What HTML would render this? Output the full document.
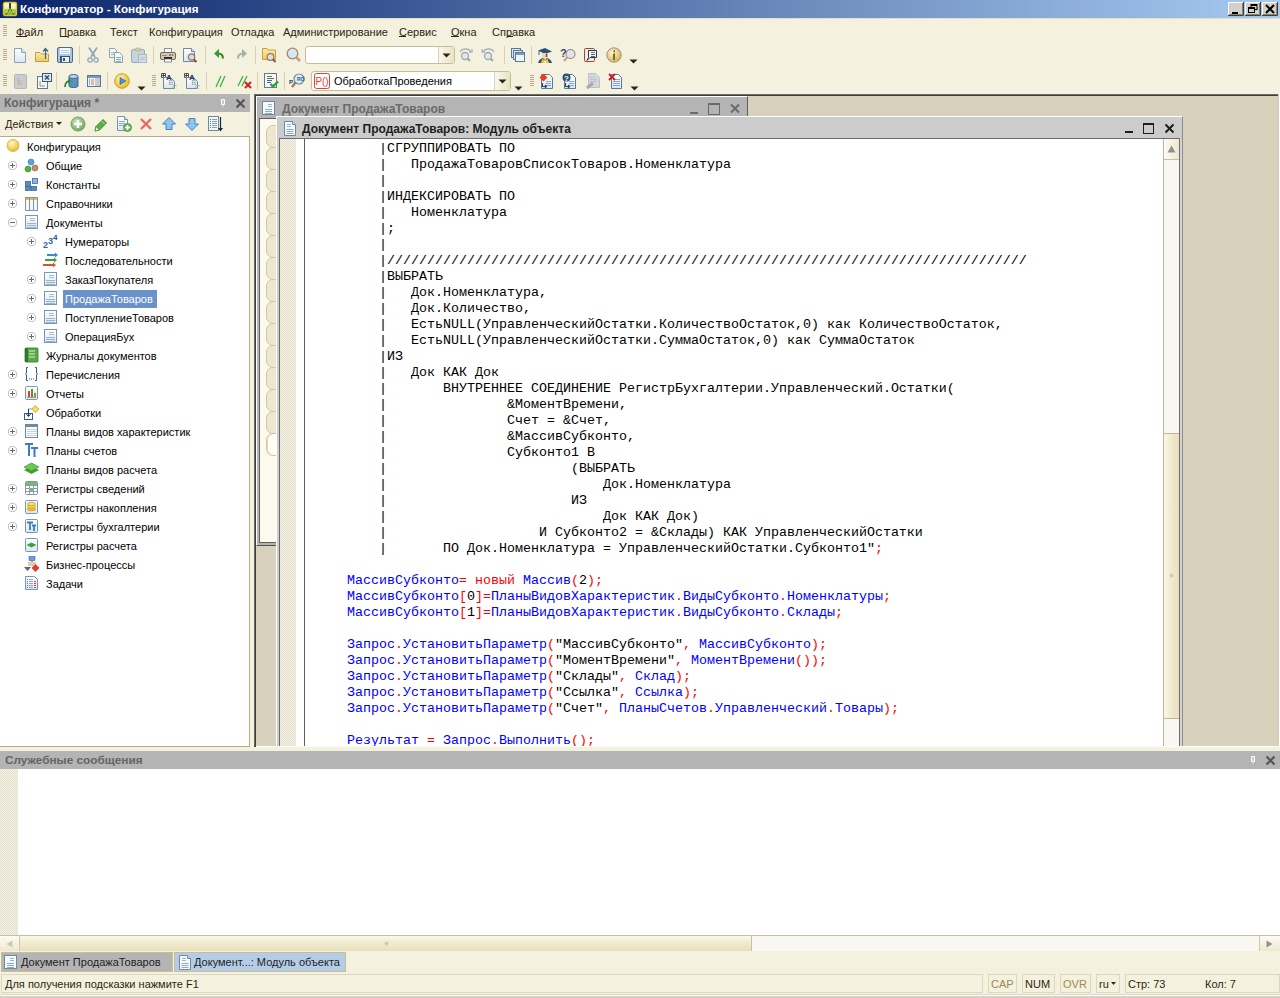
<!DOCTYPE html><html><head><meta charset="utf-8"><style>
html,body{margin:0;padding:0;width:1280px;height:998px;overflow:hidden;background:#F4F1DE;font-family:'Liberation Sans', sans-serif;font-size:11px;color:#000;}
div{box-sizing:border-box;}
svg{display:block;}
.t{position:absolute;white-space:pre;}
</style></head><body>
<div style="position:absolute;left:0px;top:0px;width:1280px;height:18px;background:linear-gradient(to right,#0A246A,#A6CAF0);"></div><svg style="position:absolute;left:2px;top:1px" width="16" height="16" viewBox="0 0 16 16"><defs><linearGradient id="gapp" x1="0" y1="0" x2="0" y2="1"><stop offset="0" stop-color="#FFFDF0"/><stop offset="0.45" stop-color="#F0F0A0"/><stop offset="0.55" stop-color="#A8D050"/><stop offset="1" stop-color="#78B030"/></linearGradient></defs><rect x="1.5" y="1.5" width="13" height="13" rx="1.5" fill="url(#gapp)" stroke="#E8C020" stroke-width="1.4"/><path d="M7 2H9V7H7Z" fill="#404040"/><path d="M8 7L4 14M8 7L12 14" stroke="#606040" stroke-width="1"/><circle cx="5" cy="11" r="0.8" fill="#E8F0A0"/><circle cx="11" cy="11" r="0.8" fill="#E8F0A0"/></svg><div style="position:absolute;left:20px;top:1px;white-space:pre;font-weight:bold;font-size:11.7px;color:#fff;line-height:16px;">Конфигуратор - Конфигурация</div><svg style="position:absolute;left:1228px;top:2px" width="16" height="14" viewBox="0 0 16 14"><rect width="16" height="14" fill="#D4D0C8"/><path d="M0 13.5H15.5V0" stroke="#404040" fill="none"/><path d="M0.5 13V0.5H15" stroke="#fff" fill="none"/><path d="M1 12.5H14.5V1" stroke="#808080" fill="none"/><rect x="4" y="10" width="6" height="2" fill="#000"/></svg><svg style="position:absolute;left:1245px;top:2px" width="16" height="14" viewBox="0 0 16 14"><rect width="16" height="14" fill="#D4D0C8"/><path d="M0 13.5H15.5V0" stroke="#404040" fill="none"/><path d="M0.5 13V0.5H15" stroke="#fff" fill="none"/><path d="M1 12.5H14.5V1" stroke="#808080" fill="none"/><rect x="6" y="2.5" width="6" height="5" fill="none" stroke="#000"/><rect x="6" y="2" width="6" height="2" fill="#000"/><rect x="3.5" y="5.5" width="6" height="5" fill="#D4D0C8" stroke="#000"/><rect x="3" y="5" width="7" height="2" fill="#000"/></svg><svg style="position:absolute;left:1262px;top:2px" width="16" height="14" viewBox="0 0 16 14"><rect width="16" height="14" fill="#D4D0C8"/><path d="M0 13.5H15.5V0" stroke="#404040" fill="none"/><path d="M0.5 13V0.5H15" stroke="#fff" fill="none"/><path d="M1 12.5H14.5V1" stroke="#808080" fill="none"/><path d="M4 3 L12 11 M12 3 L4 11" stroke="#000" stroke-width="2"/></svg><div style="position:absolute;left:0px;top:18px;width:1280px;height:1px;background:#E2DECA;"></div><svg style="position:absolute;left:3px;top:25px" width="4" height="12" viewBox="0 0 4 12"><rect x="0" y="0" width="4" height="1" fill="#B5AD8E"/><rect x="0" y="2" width="4" height="1" fill="#B5AD8E"/><rect x="0" y="4" width="4" height="1" fill="#B5AD8E"/><rect x="0" y="6" width="4" height="1" fill="#B5AD8E"/><rect x="0" y="8" width="4" height="1" fill="#B5AD8E"/><rect x="0" y="10" width="4" height="1" fill="#B5AD8E"/></svg><div style="position:absolute;left:16px;top:25px;white-space:pre;color:#2E2610;font-size:11px;line-height:14px;">Файл</div><div style="position:absolute;left:59px;top:25px;white-space:pre;color:#2E2610;font-size:11px;line-height:14px;">Правка</div><div style="position:absolute;left:110px;top:25px;white-space:pre;color:#2E2610;font-size:11px;line-height:14px;">Текст</div><div style="position:absolute;left:149px;top:25px;white-space:pre;color:#2E2610;font-size:11px;line-height:14px;">Конфигурация</div><div style="position:absolute;left:231px;top:25px;white-space:pre;color:#2E2610;font-size:11px;line-height:14px;">Отладка</div><div style="position:absolute;left:283px;top:25px;white-space:pre;color:#2E2610;font-size:11px;line-height:14px;">Администрирование</div><div style="position:absolute;left:399px;top:25px;white-space:pre;color:#2E2610;font-size:11px;line-height:14px;">Сервис</div><div style="position:absolute;left:451px;top:25px;white-space:pre;color:#2E2610;font-size:11px;line-height:14px;">Окна</div><div style="position:absolute;left:492px;top:25px;white-space:pre;color:#2E2610;font-size:11px;line-height:14px;">Справка</div><div style="position:absolute;left:16px;top:36px;width:11px;height:1px;background:#2E2610;"></div><div style="position:absolute;left:60px;top:36px;width:8px;height:1px;background:#2E2610;"></div><div style="position:absolute;left:399px;top:36px;width:7px;height:1px;background:#2E2610;"></div><div style="position:absolute;left:451px;top:36px;width:8px;height:1px;background:#2E2610;"></div><div style="position:absolute;left:507px;top:36px;width:6px;height:1px;background:#2E2610;"></div><svg width="0" height="0" style="position:absolute"><defs><linearGradient id="gpage" x1="0" y1="0" x2="0" y2="1"><stop offset="0" stop-color="#fff"/><stop offset="1" stop-color="#D8E6F2"/></linearGradient><radialGradient id="ginfo" cx="0.4" cy="0.35" r="0.7"><stop offset="0" stop-color="#FFF4DC"/><stop offset="1" stop-color="#E8A848"/></radialGradient><radialGradient id="gplay" cx="0.4" cy="0.35" r="0.7"><stop offset="0" stop-color="#FFF4B0"/><stop offset="1" stop-color="#E8B818"/></radialGradient><linearGradient id="gfold" x1="0" y1="0" x2="0" y2="1"><stop offset="0" stop-color="#FBEBA8"/><stop offset="1" stop-color="#EEC860"/></linearGradient><linearGradient id="gcombo" x1="0" y1="0" x2="1" y2="0"><stop offset="0" stop-color="#FBF9EE"/><stop offset="1" stop-color="#E8E0C0"/></linearGradient></defs></svg><svg style="position:absolute;left:3px;top:49px" width="4" height="12" viewBox="0 0 4 12"><rect x="0" y="0" width="4" height="1" fill="#B5AD8E"/><rect x="0" y="2" width="4" height="1" fill="#B5AD8E"/><rect x="0" y="4" width="4" height="1" fill="#B5AD8E"/><rect x="0" y="6" width="4" height="1" fill="#B5AD8E"/><rect x="0" y="8" width="4" height="1" fill="#B5AD8E"/><rect x="0" y="10" width="4" height="1" fill="#B5AD8E"/></svg><svg style="position:absolute;left:12px;top:47px" width="16" height="16" viewBox="0 0 16 16"><path d="M2.5 1.5H9.5L13.5 5.5V15.5H2.5Z" fill="url(#gpage)" stroke="#8AA2B8"/><path d="M9.5 1.5V5.5H13.5" fill="#DCE8F2" stroke="#8AA2B8"/></svg><svg style="position:absolute;left:34px;top:47px" width="16" height="16" viewBox="0 0 16 16"><path d="M1.5 5.5H6L7.5 7H14.5V14.5H1.5Z" fill="url(#gfold)" stroke="#C49A40"/><path d="M11.5 12V2 M9 4.5L11.5 1.5L14 4.5" stroke="#3A6282" stroke-width="1.2" fill="none"/></svg><svg style="position:absolute;left:57px;top:47px" width="16" height="16" viewBox="0 0 16 16"><rect x="0.5" y="0.5" width="15" height="15" rx="1.5" fill="#A8C8E4" stroke="#4A6A88"/><rect x="3" y="1" width="10" height="6" fill="#F4F8FA"/><path d="M4 3.5H12M4 5.5H12" stroke="#A8D4E0"/><rect x="3" y="9" width="10" height="6" fill="#3A5470"/><rect x="5" y="10" width="7" height="5" fill="#F0F0F0"/><rect x="6" y="11" width="2" height="3" fill="#3A5470"/></svg><svg style="position:absolute;left:86px;top:47px" width="16" height="16" viewBox="0 0 16 16"><path d="M3 0.5L9 10 M11 0.5L5 10" stroke="#8EA2B6" stroke-width="1.7"/><circle cx="4" cy="13" r="2.2" fill="none" stroke="#8EA2B6" stroke-width="1.2"/><circle cx="10" cy="13" r="2.2" fill="none" stroke="#8EA2B6" stroke-width="1.2"/></svg><svg style="position:absolute;left:108px;top:47px" width="16" height="16" viewBox="0 0 16 16"><path d="M1.5 1.5H6.5L8.5 3.5V10.5H1.5Z" fill="#F4F8FC" stroke="#8AA8A0"/><path d="M3 5.5H6M3 7.5H7" stroke="#9AB0C0"/><path d="M6.5 5.5H11.5L14.5 8.5V15.5H6.5Z" fill="#F4F8FC" stroke="#8AA8A0"/><path d="M8 10.5H13M8 12.5H13M8 14.5H13" stroke="#8AA4BC"/></svg><svg style="position:absolute;left:131px;top:47px" width="16" height="16" viewBox="0 0 16 16"><rect x="0.5" y="2.5" width="13" height="13" rx="1.5" fill="#C8D4DC" stroke="#98AABA"/><rect x="4" y="1" width="6" height="3" rx="1.5" fill="#D0C8A8" stroke="#B0A888" stroke-width="0.6"/><rect x="7.5" y="7.5" width="8" height="8" fill="#D4DEE6" stroke="#A8B8C4"/><path d="M9 10.5H14M9 12.5H14" stroke="#B0C0CC"/></svg><svg style="position:absolute;left:160px;top:47px" width="16" height="16" viewBox="0 0 16 16"><rect x="4.5" y="1.5" width="7" height="5" fill="#F8FAFC" stroke="#8898A8"/><rect x="0.5" y="5.5" width="15" height="7" rx="1.5" fill="#D8C8B8" stroke="#706860"/><path d="M2 8.5H7" stroke="#A08870"/><circle cx="10" cy="8" r="0.9" fill="#E03030"/><circle cx="12.5" cy="8" r="0.9" fill="#30B030"/><rect x="4" y="10" width="8" height="2" fill="#202020"/><rect x="4.5" y="12" width="7" height="3" fill="#fff" stroke="#707070" stroke-width="0.8"/></svg><svg style="position:absolute;left:182px;top:47px" width="16" height="16" viewBox="0 0 16 16"><path d="M1.5 1.5H9.5L12.5 4.5V14.5H1.5Z" fill="url(#gpage)" stroke="#6A8AA8"/><path d="M9.5 1.5V4.5H12.5" fill="#DCE8F2" stroke="#6A8AA8"/><circle cx="9.5" cy="10" r="3.2" fill="#C8E0F4" stroke="#A07050" stroke-width="1.2"/><path d="M11.7 12.3L14.5 15" stroke="#8A5030" stroke-width="2"/></svg><svg style="position:absolute;left:213px;top:47px" width="16" height="16" viewBox="0 0 16 16"><path d="M10 11.5C10 8 8.5 6.5 5 6.5" stroke="#3A8A2A" stroke-width="2.2" fill="none"/><path d="M1 6.5L6 2V11Z" fill="#3A9A2A"/></svg><svg style="position:absolute;left:235px;top:47px" width="16" height="16" viewBox="0 0 16 16"><path d="M3 11.5C3 8 4.5 6.5 8 6.5" stroke="#A8B8A8" stroke-width="2.2" fill="none"/><path d="M12 6.5L7 2V11Z" fill="#A0B4A0"/></svg><svg style="position:absolute;left:261px;top:47px" width="16" height="16" viewBox="0 0 16 16"><path d="M1.5 1.5H6L7 3H14.5V12.5H1.5Z" fill="url(#gfold)" stroke="#C8A040"/><circle cx="9.5" cy="10" r="3.3" fill="#D0E4F4" stroke="#A07858" stroke-width="1.2"/><path d="M11.8 12.3L14.5 15" stroke="#8A6040" stroke-width="2"/></svg><svg style="position:absolute;left:286px;top:47px" width="16" height="16" viewBox="0 0 16 16"><circle cx="6.5" cy="6.5" r="5.3" fill="#D8E6F2" stroke="#A88870" stroke-width="1.3"/><path d="M10.3 10.3L14 14" stroke="#C0A088" stroke-width="2.6"/></svg><svg style="position:absolute;left:458px;top:47px" width="16" height="16" viewBox="0 0 16 16"><circle cx="7" cy="9" r="3.5" fill="#E0E8EC" stroke="#A0A8B0" stroke-width="1.3"/><path d="M9.5 11.5L12 14" stroke="#A8A098" stroke-width="2"/><path d="M2 5C4 1 11 1 13 5" stroke="#A8B4BC" fill="none" stroke-width="1.3"/><path d="M11 5L14 5L14 2" stroke="#A8B4BC" fill="none" stroke-width="1.3"/></svg><svg style="position:absolute;left:480px;top:47px" width="16" height="16" viewBox="0 0 16 16"><circle cx="8" cy="9" r="3.5" fill="#E0E8EC" stroke="#A0A8B0" stroke-width="1.3"/><path d="M10.5 11.5L13 14" stroke="#A8A098" stroke-width="2"/><path d="M14 5C12 1 5 1 3 5" stroke="#A8B4BC" fill="none" stroke-width="1.3"/><path d="M5 5L2 5L2 2" stroke="#A8B4BC" fill="none" stroke-width="1.3"/></svg><svg style="position:absolute;left:510px;top:47px" width="16" height="16" viewBox="0 0 16 16"><rect x="1.5" y="1.5" width="9" height="9" fill="#DCE8F4" stroke="#5A7A9A"/><rect x="3.5" y="3.5" width="9" height="9" fill="#DCE8F4" stroke="#5A7A9A"/><rect x="5.5" y="5.5" width="9" height="9" fill="#EEF4FA" stroke="#5A7A9A"/><rect x="6" y="6" width="8" height="2" fill="#7A9ABA"/></svg><svg style="position:absolute;left:537px;top:47px" width="16" height="16" viewBox="0 0 16 16"><path d="M1 3.5L8 1L15 4.5L8 7Z" fill="#2A5278"/><path d="M2 4V8" stroke="#3A6A98" stroke-width="1"/><path d="M5 6V9C5 11 6.5 12 8 12C9.5 12 11 11 11 9V6" fill="#F4D4B8"/><path d="M9.5 6.5V10" stroke="#8A5030" stroke-width="1.5"/><path d="M1 16C2 12.5 4 11.5 6 11L8 13L10 11C12 11.5 14 12.5 15 16Z" fill="#2A5278"/><path d="M5.5 11.5L4 16H12L10.5 11.5L8 14Z" fill="#F0C830"/><path d="M7 13.5L8 16H9L9 13.5Z" fill="#fff"/></svg><svg style="position:absolute;left:560px;top:47px" width="16" height="16" viewBox="0 0 16 16"><text x="0" y="10" font-size="11" font-weight="bold" fill="#2A4A70" font-family="Liberation Sans">?</text><circle cx="10.5" cy="7" r="4.5" fill="#D8E6F4" stroke="#A88068" stroke-width="1.1"/><path d="M7.5 10L4 14" stroke="#C8A088" stroke-width="2.2"/></svg><svg style="position:absolute;left:583px;top:47px" width="16" height="16" viewBox="0 0 16 16"><rect x="1.5" y="1.5" width="10" height="13" rx="1" fill="#FCE8D8" stroke="#8A5030"/><path d="M5.5 3.5H13.5V10.5H7L4 13.5L5.5 10.5Z" fill="#F4F8FC" stroke="#1A3A6A"/><path d="M8 5.5H12" stroke="#30A040"/><path d="M8 7.5H12" stroke="#D03030"/><path d="M8 9.5H12" stroke="#3A6AAA"/></svg><svg style="position:absolute;left:606px;top:47px" width="16" height="16" viewBox="0 0 16 16"><circle cx="8" cy="8" r="7.2" fill="url(#ginfo)" stroke="#9A9080"/><path d="M7 7L9 6V13H7Z" fill="#3A8A20"/><path d="M7.5 3.5L9 3V5L7.5 5.5Z" fill="#3A8A20"/></svg><div style="position:absolute;left:79px;top:46px;width:1px;height:18px;background:#D8D0B0;"></div><div style="position:absolute;left:153px;top:46px;width:1px;height:18px;background:#D8D0B0;"></div><div style="position:absolute;left:205px;top:46px;width:1px;height:18px;background:#D8D0B0;"></div><div style="position:absolute;left:255px;top:46px;width:1px;height:18px;background:#D8D0B0;"></div><div style="position:absolute;left:504px;top:46px;width:1px;height:18px;background:#D8D0B0;"></div><div style="position:absolute;left:531px;top:46px;width:1px;height:18px;background:#D8D0B0;"></div><svg style="position:absolute;left:629px;top:59px" width="9" height="5" viewBox="0 0 9 5"><path d="M0.5 0.5H8.5L4.5 4.5Z" fill="#2E2610"/></svg><div style="position:absolute;left:305px;top:46px;width:150px;height:18px;background:#fff;border:1px solid #C8BE96;border-radius:3px;"></div><div style="position:absolute;left:438px;top:47px;width:16px;height:16px;background:linear-gradient(to right,#FBF8EC,#E9E2C6);border-left:1px solid #D8D0B0;border-radius:0 2px 2px 0;"></div><svg style="position:absolute;left:442px;top:53px" width="9" height="5" viewBox="0 0 9 5"><path d="M0.5 0.5H8.5L4.5 4.5Z" fill="#2E2610"/></svg><svg style="position:absolute;left:3px;top:75px" width="4" height="12" viewBox="0 0 4 12"><rect x="0" y="0" width="4" height="1" fill="#B5AD8E"/><rect x="0" y="2" width="4" height="1" fill="#B5AD8E"/><rect x="0" y="4" width="4" height="1" fill="#B5AD8E"/><rect x="0" y="6" width="4" height="1" fill="#B5AD8E"/><rect x="0" y="8" width="4" height="1" fill="#B5AD8E"/><rect x="0" y="10" width="4" height="1" fill="#B5AD8E"/></svg><svg style="position:absolute;left:13px;top:73px" width="16" height="16" viewBox="0 0 16 16"><rect x="1.5" y="1.5" width="12" height="14" rx="1" fill="#C8CCD0" stroke="#B0B8BC"/><path d="M5 5V11H9M5 8H9" stroke="#D8A090" fill="none"/></svg><svg style="position:absolute;left:36px;top:73px" width="16" height="16" viewBox="0 0 16 16"><rect x="1.5" y="3.5" width="10" height="12" fill="#F4F8FC" stroke="#5A7C9C"/><path d="M4 8V13H9" stroke="#C08060" fill="none"/><rect x="6.5" y="0.5" width="9" height="8" fill="#DCE8F4" stroke="#3A5A7A"/><path d="M9 2.5L13 6.5M13 2.5L9 6.5" stroke="#2A4A6A" stroke-width="1.4"/></svg><svg style="position:absolute;left:63px;top:73px" width="16" height="16" viewBox="0 0 16 16"><path d="M6 3.5V13C6 15 15 15 15 13V3.5" fill="#5A90C0" stroke="#3A6890"/><ellipse cx="10.5" cy="3.5" rx="4.5" ry="2" fill="#B8D8F0" stroke="#3A6890"/><path d="M2 14C2 10 4 8 7 8" stroke="#2A8A3A" stroke-width="1.8" fill="none"/><path d="M5 6L8.5 8L5.5 10.5Z" fill="#2A8A3A"/></svg><svg style="position:absolute;left:86px;top:73px" width="16" height="16" viewBox="0 0 16 16"><rect x="1.5" y="2.5" width="13" height="11" fill="#F0F4F8" stroke="#5A7A9A"/><rect x="2" y="3" width="12" height="2" fill="#7A9ABA"/><rect x="9" y="5" width="5" height="8" fill="#C8CCD0"/><path d="M3 7H4M3 9H4M3 11H4" stroke="#3A6A9A"/><path d="M5 7H8M5 9H8M5 11H8" stroke="#D08050"/></svg><svg style="position:absolute;left:114px;top:73px" width="16" height="16" viewBox="0 0 16 16"><circle cx="8" cy="8" r="7.3" fill="url(#gplay)" stroke="#C8A020"/><path d="M6 4.5L12 8L6 11.5Z" fill="#4A90D8" stroke="#2A6AA8" stroke-width="0.6"/></svg><svg style="position:absolute;left:161px;top:73px" width="16" height="16" viewBox="0 0 16 16"><path d="M0.5 0.5H4.5V4.5H0.5ZM0.5 2.5H4.5M2.5 0.5V4.5" stroke="#303030" stroke-width="0.8" fill="none"/><path d="M2.5 4.5H9.5L13.5 8.5V15.5H2.5Z" fill="url(#gpage)" stroke="#6A8AA8"/><text x="5" y="7" font-size="8" font-weight="bold" fill="#1A3A6A" font-family="Liberation Sans">A</text><text x="7.5" y="12" font-size="7" fill="#909898" font-family="Liberation Sans">B</text><text x="11" y="16.5" font-size="7" fill="#909898" font-family="Liberation Sans">C</text></svg><svg style="position:absolute;left:184px;top:73px" width="16" height="16" viewBox="0 0 16 16"><path d="M0.5 0.5H4.5V4.5H0.5ZM0.5 2.5H4.5M2.5 0.5V4.5" stroke="#303030" stroke-width="0.8" fill="none"/><path d="M2.5 4.5H9.5L13.5 8.5V15.5H2.5Z" fill="url(#gpage)" stroke="#6A8AA8"/><text x="5" y="7" font-size="8" font-weight="bold" fill="#1A3A6A" font-family="Liberation Sans">A</text><text x="7.5" y="12" font-size="7" fill="#909898" font-family="Liberation Sans">B</text><text x="11" y="16.5" font-size="7" fill="#909898" font-family="Liberation Sans">C</text></svg><svg style="position:absolute;left:214px;top:73px" width="16" height="16" viewBox="0 0 16 16"><path d="M2 14L7 3M6 14L11 3" stroke="#40B040" stroke-width="1.3"/></svg><svg style="position:absolute;left:237px;top:73px" width="16" height="16" viewBox="0 0 16 16"><path d="M1 13L6 3M5 13L10 3" stroke="#40B040" stroke-width="1.3"/><path d="M8 9L14 15M14 9L8 15" stroke="#D02020" stroke-width="2"/></svg><svg style="position:absolute;left:263px;top:73px" width="16" height="16" viewBox="0 0 16 16"><rect x="1.5" y="0.5" width="12" height="14" fill="#F4F8FC" stroke="#5A7A9A"/><path d="M4 3.5H9" stroke="#30A040"/><path d="M4 5.5H11" stroke="#D04040"/><path d="M4 7.5H9" stroke="#3A6AAA"/><path d="M4 9.5H8" stroke="#3A6AAA"/><path d="M7.5 11L10 13.5L15 8.5" stroke="#30A030" stroke-width="2.4" fill="none"/></svg><svg style="position:absolute;left:289px;top:73px" width="16" height="16" viewBox="0 0 16 16"><circle cx="10" cy="6" r="5" fill="#E0ECF6" stroke="#6A8AA8" stroke-width="1.2"/><text x="0" y="11" font-size="6" font-weight="bold" fill="#1A3A6A" font-family="Liberation Sans">P</text><text x="8" y="8" font-size="5" font-weight="bold" fill="#2A5A8A" font-family="Liberation Sans">ROL</text><path d="M6.5 9.5L3 14" stroke="#A07850" stroke-width="2.2"/></svg><svg style="position:absolute;left:539px;top:73px" width="16" height="16" viewBox="0 0 16 16"><path d="M2.5 1.5H10.5L13.5 4.5V15.5H2.5Z" fill="url(#gpage)" stroke="#5A7A98"/><path d="M7 8.5H12M7 10.5H12M7 12.5H12" stroke="#8AAAC4"/><path d="M3.5 10V13.5H7M6 12L7.5 13.5L6 15" stroke="#2A4A68" stroke-width="1.1" fill="none"/><path d="M4.5 0.5L8.5 4.5L4.5 8.5L0.5 4.5Z" fill="#E84020"/></svg><svg style="position:absolute;left:562px;top:73px" width="16" height="16" viewBox="0 0 16 16"><path d="M2.5 1.5H10.5L13.5 4.5V15.5H2.5Z" fill="url(#gpage)" stroke="#5A7A98"/><path d="M7 8.5H12M7 10.5H12M7 12.5H12" stroke="#8AAAC4"/><path d="M3.5 10V13.5H7M6 12L7.5 13.5L6 15" stroke="#2A4A68" stroke-width="1.1" fill="none"/><circle cx="4.5" cy="4.5" r="4" fill="#2A5070"/><text x="2" y="8" font-size="8" font-weight="bold" fill="#fff" font-family="Liberation Sans">?</text></svg><svg style="position:absolute;left:585px;top:73px" width="16" height="16" viewBox="0 0 16 16"><path d="M3.5 0.5H10.5L14.5 4.5V14.5H3.5Z" fill="#D4D8DC" stroke="#B8C0C8"/><path d="M5 4.5H10M5 6.5H12M5 8.5H12" stroke="#B8C4D0"/><path d="M2 15L8 10" stroke="#B0A8A8" stroke-width="3.2"/></svg><svg style="position:absolute;left:608px;top:73px" width="16" height="16" viewBox="0 0 16 16"><path d="M3.5 1.5H10.5L13.5 4.5V15.5H3.5Z" fill="url(#gpage)" stroke="#5A7A98"/><path d="M5 6.5H12M5 8.5H12M5 10.5H12M5 12.5H12" stroke="#8AAAC4"/><path d="M1 1L7 7M7 1L1 7" stroke="#C82020" stroke-width="1.8"/></svg><div style="position:absolute;left:56px;top:72px;width:1px;height:18px;background:#D8D0B0;"></div><div style="position:absolute;left:107px;top:72px;width:1px;height:18px;background:#D8D0B0;"></div><div style="position:absolute;left:206px;top:72px;width:1px;height:18px;background:#D8D0B0;"></div><div style="position:absolute;left:257px;top:72px;width:1px;height:18px;background:#D8D0B0;"></div><div style="position:absolute;left:284px;top:72px;width:1px;height:18px;background:#D8D0B0;"></div><svg style="position:absolute;left:152px;top:75px" width="4" height="12" viewBox="0 0 4 12"><rect x="0" y="0" width="4" height="1" fill="#B5AD8E"/><rect x="0" y="2" width="4" height="1" fill="#B5AD8E"/><rect x="0" y="4" width="4" height="1" fill="#B5AD8E"/><rect x="0" y="6" width="4" height="1" fill="#B5AD8E"/><rect x="0" y="8" width="4" height="1" fill="#B5AD8E"/><rect x="0" y="10" width="4" height="1" fill="#B5AD8E"/></svg><svg style="position:absolute;left:530px;top:75px" width="4" height="12" viewBox="0 0 4 12"><rect x="0" y="0" width="4" height="1" fill="#B5AD8E"/><rect x="0" y="2" width="4" height="1" fill="#B5AD8E"/><rect x="0" y="4" width="4" height="1" fill="#B5AD8E"/><rect x="0" y="6" width="4" height="1" fill="#B5AD8E"/><rect x="0" y="8" width="4" height="1" fill="#B5AD8E"/><rect x="0" y="10" width="4" height="1" fill="#B5AD8E"/></svg><svg style="position:absolute;left:137px;top:86px" width="9" height="5" viewBox="0 0 9 5"><path d="M0.5 0.5H8.5L4.5 4.5Z" fill="#2E2610"/></svg><svg style="position:absolute;left:514px;top:86px" width="9" height="5" viewBox="0 0 9 5"><path d="M0.5 0.5H8.5L4.5 4.5Z" fill="#2E2610"/></svg><svg style="position:absolute;left:630px;top:86px" width="9" height="5" viewBox="0 0 9 5"><path d="M0.5 0.5H8.5L4.5 4.5Z" fill="#2E2610"/></svg><div style="position:absolute;left:311px;top:71px;width:200px;height:20px;background:#fff;border:1px solid #C8BE96;border-radius:3px;"></div><div style="position:absolute;left:494px;top:72px;width:16px;height:18px;background:linear-gradient(to right,#FBF8EC,#E9E2C6);border-left:1px solid #D8D0B0;border-radius:0 2px 2px 0;"></div><svg style="position:absolute;left:498px;top:79px" width="9" height="5" viewBox="0 0 9 5"><path d="M0.5 0.5H8.5L4.5 4.5Z" fill="#2E2610"/></svg><svg style="position:absolute;left:314px;top:73px" width="16" height="16" viewBox="0 0 16 16"><rect x="0.5" y="0.5" width="15" height="15" rx="2" fill="#fff" stroke="#E04030"/><text x="1.5" y="12" font-size="10" fill="#E04030" font-family="Liberation Sans" textLength="13" lengthAdjust="spacingAndGlyphs">P()</text></svg><div style="position:absolute;left:334px;top:74px;white-space:pre;font-size:11px;line-height:14px;color:#000;">ОбработкаПроведения</div><div style="position:absolute;left:0px;top:94px;width:250px;height:18px;background:#B4B4B4;"></div><div style="position:absolute;left:4px;top:96px;white-space:pre;font-weight:bold;font-size:12px;line-height:14px;color:#646464;">Конфигурация *</div><svg style="position:absolute;left:220px;top:98px" width="6" height="9" viewBox="0 0 6 9"><path d="M1.5 1.5H4.5V6.5H1.5Z" fill="#C8C8C8" stroke="#fff"/><rect x="2.5" y="7" width="1" height="2" fill="#E0E0E0"/></svg><svg style="position:absolute;left:235px;top:98px" width="11" height="11" viewBox="0 0 11 11"><path d="M1.5 1.5L9.5 9.5M9.5 1.5L1.5 9.5" stroke="#555" stroke-width="2.2"/></svg><div style="position:absolute;left:5px;top:117px;white-space:pre;font-size:11px;line-height:14px;color:#2E2610;">Действия</div><svg style="position:absolute;left:56px;top:122px" width="6" height="3" viewBox="0 0 6 3"><path d="M0 0H6L3 3Z" fill="#2E2610"/></svg><svg width="0" height="0" style="position:absolute"><defs><radialGradient id="gadd" cx="0.4" cy="0.35" r="0.7"><stop offset="0" stop-color="#C8E8B8"/><stop offset="1" stop-color="#68A858"/></radialGradient></defs></svg><svg style="position:absolute;left:70px;top:116px" width="16" height="16" viewBox="0 0 16 16"><circle cx="8" cy="8" r="7" fill="url(#gadd)" stroke="#7A9A70"/><path d="M8 4V12M4 8H12" stroke="#fff" stroke-width="2.4"/></svg><svg style="position:absolute;left:92px;top:116px" width="16" height="16" viewBox="0 0 16 16"><path d="M3 15L4 10.5L11 3.5L14.5 7L7.5 14Z" fill="#58B040" stroke="#2A7A20" stroke-width="0.8"/><path d="M9.5 5L13 8.5" stroke="#A8E090" stroke-width="1"/><path d="M3 15L4 10.5L7.5 14Z" fill="#F4F4E8" stroke="#2A7A20" stroke-width="0.6"/></svg><svg style="position:absolute;left:116px;top:116px" width="16" height="16" viewBox="0 0 16 16"><path d="M1.5 0.5H8.5L11.5 3.5V14.5H1.5Z" fill="url(#gpage)" stroke="#7A96B0"/><path d="M8.5 0.5V3.5H11.5" fill="#DCE8F2" stroke="#7A96B0"/><path d="M3 5.5H9M3 7.5H9M3 9.5H8" stroke="#90A8C0"/><circle cx="11.5" cy="11.5" r="4" fill="#68B858" stroke="#3A8A3A" stroke-width="0.7"/><path d="M11.5 9V14M9 11.5H14" stroke="#fff" stroke-width="1.6"/></svg><svg style="position:absolute;left:138px;top:116px" width="16" height="16" viewBox="0 0 16 16"><path d="M3 3L13 13M13 3L3 13" stroke="#E86868" stroke-width="2.4"/></svg><svg style="position:absolute;left:161px;top:116px" width="16" height="16" viewBox="0 0 16 16"><path d="M8 1.5L14.5 8H11V13.5H5V8H1.5Z" fill="#90C4F0" stroke="#3A78B8" stroke-width="0.9"/></svg><svg style="position:absolute;left:184px;top:116px" width="16" height="16" viewBox="0 0 16 16"><path d="M8 14.5L14.5 8H11V2.5H5V8H1.5Z" fill="#90C4F0" stroke="#3A78B8" stroke-width="0.9"/></svg><svg style="position:absolute;left:207px;top:116px" width="16" height="16" viewBox="0 0 16 16"><rect x="1.5" y="0.5" width="10" height="14" fill="#F4F8FC" stroke="#6A8AA8"/><path d="M3 3.5H4M3 5.5H4M3 7.5H4M3 9.5H4M3 11.5H4" stroke="#3A78B8"/><path d="M5 3.5H10M5 5.5H10M5 7.5H10M5 9.5H10M5 11.5H10" stroke="#8AA0B4"/><path d="M13.5 1V13" stroke="#1A2A3A" stroke-width="1.2"/><path d="M11 12H16L13.5 15.5Z" fill="#1A2A3A"/></svg><div style="position:absolute;left:0px;top:136px;width:250px;height:611px;background:#fff;border:1px solid #B4AC88;border-left:none;"></div><svg width="0" height="0" style="position:absolute"><defs><radialGradient id="gconf" cx="0.4" cy="0.3" r="0.75"><stop offset="0" stop-color="#FFF8C0"/><stop offset="1" stop-color="#E8B820"/></radialGradient></defs></svg><svg style="position:absolute;left:5px;top:138px" width="16" height="16" viewBox="0 0 16 16"><circle cx="8" cy="7.5" r="6" fill="url(#gconf)" stroke="#C8A030" stroke-width="0.7"/></svg><div style="position:absolute;left:27px;top:140px;white-space:pre;font-size:11px;line-height:14px;color:#000;">Конфигурация</div><svg style="position:absolute;left:8px;top:161px" width="9" height="9" viewBox="0 0 9 9"><circle cx="4.5" cy="4.5" r="4.1" fill="#fff" stroke="#B4B4B4" stroke-width="0.9"/><rect x="2" y="4" width="5" height="1" fill="#6A6A6A"/><rect x="4" y="2" width="1" height="5" fill="#6A6A6A"/></svg><svg style="position:absolute;left:24px;top:157px" width="16" height="16" viewBox="0 0 16 16"><circle cx="7" cy="5" r="3" fill="#60A0D8" stroke="#3A78B0" stroke-width="0.6"/><circle cx="4" cy="12" r="3" fill="#50B040" stroke="#2A8A20" stroke-width="0.6"/><circle cx="11" cy="11" r="3" fill="#C09070" stroke="#8A5A30" stroke-width="0.6"/></svg><div style="position:absolute;left:46px;top:159px;white-space:pre;font-size:11px;line-height:14px;color:#000;">Общие</div><svg style="position:absolute;left:8px;top:180px" width="9" height="9" viewBox="0 0 9 9"><circle cx="4.5" cy="4.5" r="4.1" fill="#fff" stroke="#B4B4B4" stroke-width="0.9"/><rect x="2" y="4" width="5" height="1" fill="#6A6A6A"/><rect x="4" y="2" width="1" height="5" fill="#6A6A6A"/></svg><svg style="position:absolute;left:24px;top:176px" width="16" height="16" viewBox="0 0 16 16"><rect x="1.5" y="5.5" width="5" height="5" fill="#5A8AC0" stroke="#3A6A9A" stroke-width="0.8"/><rect x="1.5" y="10.5" width="5" height="4" fill="#5A8AC0" stroke="#3A6A9A" stroke-width="0.8"/><rect x="7.5" y="10.5" width="5" height="4" fill="#5A8AC0" stroke="#3A6A9A" stroke-width="0.8"/><rect x="8.5" y="2.5" width="5" height="5" fill="#88B8E0" stroke="#3A6A9A" stroke-width="0.8"/></svg><div style="position:absolute;left:46px;top:178px;white-space:pre;font-size:11px;line-height:14px;color:#000;">Константы</div><svg style="position:absolute;left:8px;top:199px" width="9" height="9" viewBox="0 0 9 9"><circle cx="4.5" cy="4.5" r="4.1" fill="#fff" stroke="#B4B4B4" stroke-width="0.9"/><rect x="2" y="4" width="5" height="1" fill="#6A6A6A"/><rect x="4" y="2" width="1" height="5" fill="#6A6A6A"/></svg><svg style="position:absolute;left:24px;top:195px" width="16" height="16" viewBox="0 0 16 16"><rect x="1.5" y="2.5" width="12" height="13" fill="#F4F8FC" stroke="#7A96B0"/><rect x="2" y="3" width="11" height="2" fill="#E8C040"/><path d="M5.5 3V15M9.5 3V15" stroke="#7A96B0"/></svg><div style="position:absolute;left:46px;top:197px;white-space:pre;font-size:11px;line-height:14px;color:#000;">Справочники</div><svg style="position:absolute;left:8px;top:218px" width="9" height="9" viewBox="0 0 9 9"><circle cx="4.5" cy="4.5" r="4.1" fill="#fff" stroke="#B4B4B4" stroke-width="0.9"/><rect x="2" y="4" width="5" height="1" fill="#6A6A6A"/></svg><svg style="position:absolute;left:24px;top:214px" width="16" height="16" viewBox="0 0 16 16"><rect x="1.5" y="1.5" width="12" height="13" fill="url(#gpage)" stroke="#7A96B0"/><path d="M6 4.5H11M6 6.5H11" stroke="#A8BCCC"/><path d="M3 9.5H12M3 11.5H12M3 13.5H12" stroke="#98B4CC"/></svg><div style="position:absolute;left:46px;top:216px;white-space:pre;font-size:11px;line-height:14px;color:#000;">Документы</div><svg style="position:absolute;left:27px;top:237px" width="9" height="9" viewBox="0 0 9 9"><circle cx="4.5" cy="4.5" r="4.1" fill="#fff" stroke="#B4B4B4" stroke-width="0.9"/><rect x="2" y="4" width="5" height="1" fill="#6A6A6A"/><rect x="4" y="2" width="1" height="5" fill="#6A6A6A"/></svg><svg style="position:absolute;left:43px;top:233px" width="16" height="16" viewBox="0 0 16 16"><text x="0" y="15" font-size="9" font-weight="bold" fill="#2A6AB0" font-family="Liberation Sans">2</text><text x="5" y="11" font-size="9" font-weight="bold" fill="#2A6AB0" font-family="Liberation Sans">3</text><text x="10" y="7" font-size="8" font-weight="bold" fill="#2A4A80" font-family="Liberation Sans">4</text></svg><div style="position:absolute;left:65px;top:235px;white-space:pre;font-size:11px;line-height:14px;color:#000;">Нумераторы</div><svg style="position:absolute;left:43px;top:252px" width="16" height="16" viewBox="0 0 16 16"><path d="M4 3H13" stroke="#3A8AD0" stroke-width="2"/><path d="M12 0.5L15 3L12 5.5Z" fill="#3A8AD0"/><path d="M2 8H12" stroke="#40A040" stroke-width="2"/><path d="M11 5.5L14 8L11 10.5Z" fill="#40A040"/><path d="M0 13H11" stroke="#E05030" stroke-width="2"/><path d="M10 10.5L13 13L10 15.5Z" fill="#E05030"/></svg><div style="position:absolute;left:65px;top:254px;white-space:pre;font-size:11px;line-height:14px;color:#000;">Последовательности</div><svg style="position:absolute;left:27px;top:275px" width="9" height="9" viewBox="0 0 9 9"><circle cx="4.5" cy="4.5" r="4.1" fill="#fff" stroke="#B4B4B4" stroke-width="0.9"/><rect x="2" y="4" width="5" height="1" fill="#6A6A6A"/><rect x="4" y="2" width="1" height="5" fill="#6A6A6A"/></svg><svg style="position:absolute;left:43px;top:271px" width="16" height="16" viewBox="0 0 16 16"><rect x="1.5" y="1.5" width="12" height="13" fill="url(#gpage)" stroke="#7A96B0"/><path d="M6 4.5H11M6 6.5H11" stroke="#A8BCCC"/><path d="M3 9.5H12M3 11.5H12M3 13.5H12" stroke="#98B4CC"/></svg><div style="position:absolute;left:65px;top:273px;white-space:pre;font-size:11px;line-height:14px;color:#000;">ЗаказПокупателя</div><svg style="position:absolute;left:27px;top:294px" width="9" height="9" viewBox="0 0 9 9"><circle cx="4.5" cy="4.5" r="4.1" fill="#fff" stroke="#B4B4B4" stroke-width="0.9"/><rect x="2" y="4" width="5" height="1" fill="#6A6A6A"/><rect x="4" y="2" width="1" height="5" fill="#6A6A6A"/></svg><svg style="position:absolute;left:43px;top:290px" width="16" height="16" viewBox="0 0 16 16"><rect x="1.5" y="1.5" width="12" height="13" fill="url(#gpage)" stroke="#7A96B0"/><path d="M6 4.5H11M6 6.5H11" stroke="#A8BCCC"/><path d="M3 9.5H12M3 11.5H12M3 13.5H12" stroke="#98B4CC"/></svg><div style="position:absolute;left:63px;top:290px;width:94px;height:18px;background:#6B91CB;"></div><div style="position:absolute;left:65px;top:292px;white-space:pre;font-size:11px;line-height:14px;color:#fff;">ПродажаТоваров</div><svg style="position:absolute;left:27px;top:313px" width="9" height="9" viewBox="0 0 9 9"><circle cx="4.5" cy="4.5" r="4.1" fill="#fff" stroke="#B4B4B4" stroke-width="0.9"/><rect x="2" y="4" width="5" height="1" fill="#6A6A6A"/><rect x="4" y="2" width="1" height="5" fill="#6A6A6A"/></svg><svg style="position:absolute;left:43px;top:309px" width="16" height="16" viewBox="0 0 16 16"><rect x="1.5" y="1.5" width="12" height="13" fill="url(#gpage)" stroke="#7A96B0"/><path d="M6 4.5H11M6 6.5H11" stroke="#A8BCCC"/><path d="M3 9.5H12M3 11.5H12M3 13.5H12" stroke="#98B4CC"/></svg><div style="position:absolute;left:65px;top:311px;white-space:pre;font-size:11px;line-height:14px;color:#000;">ПоступлениеТоваров</div><svg style="position:absolute;left:27px;top:332px" width="9" height="9" viewBox="0 0 9 9"><circle cx="4.5" cy="4.5" r="4.1" fill="#fff" stroke="#B4B4B4" stroke-width="0.9"/><rect x="2" y="4" width="5" height="1" fill="#6A6A6A"/><rect x="4" y="2" width="1" height="5" fill="#6A6A6A"/></svg><svg style="position:absolute;left:43px;top:328px" width="16" height="16" viewBox="0 0 16 16"><rect x="1.5" y="1.5" width="12" height="13" fill="url(#gpage)" stroke="#7A96B0"/><path d="M6 4.5H11M6 6.5H11" stroke="#A8BCCC"/><path d="M3 9.5H12M3 11.5H12M3 13.5H12" stroke="#98B4CC"/></svg><div style="position:absolute;left:65px;top:330px;white-space:pre;font-size:11px;line-height:14px;color:#000;">ОперацияБух</div><svg style="position:absolute;left:24px;top:347px" width="16" height="16" viewBox="0 0 16 16"><rect x="1" y="1" width="13" height="14" rx="1" fill="#5AAA4A" stroke="#2A7A2A" stroke-width="0.8"/><path d="M5 4H11M5 7H11M5 10H11" stroke="#D8F0C8"/><rect x="1" y="1" width="3" height="14" fill="#2A7A2A"/></svg><div style="position:absolute;left:46px;top:349px;white-space:pre;font-size:11px;line-height:14px;color:#000;">Журналы документов</div><svg style="position:absolute;left:8px;top:370px" width="9" height="9" viewBox="0 0 9 9"><circle cx="4.5" cy="4.5" r="4.1" fill="#fff" stroke="#B4B4B4" stroke-width="0.9"/><rect x="2" y="4" width="5" height="1" fill="#6A6A6A"/><rect x="4" y="2" width="1" height="5" fill="#6A6A6A"/></svg><svg style="position:absolute;left:24px;top:366px" width="16" height="16" viewBox="0 0 16 16"><path d="M4 1.5H2.5V7L1.5 8L2.5 9V14.5H4M11 1.5H12.5V7L13.5 8L12.5 9V14.5H11" stroke="#3A5A8A" fill="none"/><path d="M5 13H6M7 13H8M9 13H10" stroke="#3A5A8A"/></svg><div style="position:absolute;left:46px;top:368px;white-space:pre;font-size:11px;line-height:14px;color:#000;">Перечисления</div><svg style="position:absolute;left:8px;top:389px" width="9" height="9" viewBox="0 0 9 9"><circle cx="4.5" cy="4.5" r="4.1" fill="#fff" stroke="#B4B4B4" stroke-width="0.9"/><rect x="2" y="4" width="5" height="1" fill="#6A6A6A"/><rect x="4" y="2" width="1" height="5" fill="#6A6A6A"/></svg><svg style="position:absolute;left:24px;top:385px" width="16" height="16" viewBox="0 0 16 16"><rect x="1.5" y="1.5" width="12" height="13" rx="1" fill="url(#gpage)" stroke="#7A96B0"/><rect x="4" y="6" width="2" height="6" fill="#E04030"/><rect x="7" y="4" width="2" height="8" fill="#40A040"/><rect x="10" y="8" width="2" height="4" fill="#E07030"/><path d="M3 12.5H12" stroke="#A0A0A0"/></svg><div style="position:absolute;left:46px;top:387px;white-space:pre;font-size:11px;line-height:14px;color:#000;">Отчеты</div><svg style="position:absolute;left:24px;top:404px" width="16" height="16" viewBox="0 0 16 16"><path d="M8 5L11 1.5L15 5L11 8.5Z" fill="#F8E060" stroke="#C8A020" stroke-width="0.8"/><rect x="0.5" y="9.5" width="8" height="6" fill="#fff" stroke="#3A5A8A"/><path d="M4.5 5V12M2.5 10L4.5 12.5L6.5 10" stroke="#1A3A6A" fill="none"/><path d="M4.5 5H8" stroke="#1A3A6A" stroke-dasharray="1,1"/></svg><div style="position:absolute;left:46px;top:406px;white-space:pre;font-size:11px;line-height:14px;color:#000;">Обработки</div><svg style="position:absolute;left:8px;top:427px" width="9" height="9" viewBox="0 0 9 9"><circle cx="4.5" cy="4.5" r="4.1" fill="#fff" stroke="#B4B4B4" stroke-width="0.9"/><rect x="2" y="4" width="5" height="1" fill="#6A6A6A"/><rect x="4" y="2" width="1" height="5" fill="#6A6A6A"/></svg><svg style="position:absolute;left:24px;top:423px" width="16" height="16" viewBox="0 0 16 16"><rect x="1.5" y="1.5" width="12" height="13" fill="#fff" stroke="#6A8AAA"/><rect x="2" y="2" width="11" height="2" fill="#6A8AAA"/><path d="M4 6V13M6 6V13M8 6V13M10 6V13M12 6V13" stroke="#8AA4C0" stroke-dasharray="1,1"/></svg><div style="position:absolute;left:46px;top:425px;white-space:pre;font-size:11px;line-height:14px;color:#000;">Планы видов характеристик</div><svg style="position:absolute;left:8px;top:446px" width="9" height="9" viewBox="0 0 9 9"><circle cx="4.5" cy="4.5" r="4.1" fill="#fff" stroke="#B4B4B4" stroke-width="0.9"/><rect x="2" y="4" width="5" height="1" fill="#6A6A6A"/><rect x="4" y="2" width="1" height="5" fill="#6A6A6A"/></svg><svg style="position:absolute;left:24px;top:442px" width="16" height="16" viewBox="0 0 16 16"><path d="M1 2H9M5 2V14" stroke="#3A7AC8" stroke-width="2"/><path d="M7 6H14M10.5 6V15" stroke="#3A7AC8" stroke-width="2"/></svg><div style="position:absolute;left:46px;top:444px;white-space:pre;font-size:11px;line-height:14px;color:#000;">Планы счетов</div><svg style="position:absolute;left:24px;top:461px" width="16" height="16" viewBox="0 0 16 16"><path d="M0 9L7.5 5L15 9L7.5 13Z" fill="#40A040"/><path d="M0 6L7.5 2L15 6L7.5 10Z" fill="#70C850" stroke="#2A8A2A" stroke-width="0.6"/></svg><div style="position:absolute;left:46px;top:463px;white-space:pre;font-size:11px;line-height:14px;color:#000;">Планы видов расчета</div><svg style="position:absolute;left:8px;top:484px" width="9" height="9" viewBox="0 0 9 9"><circle cx="4.5" cy="4.5" r="4.1" fill="#fff" stroke="#B4B4B4" stroke-width="0.9"/><rect x="2" y="4" width="5" height="1" fill="#6A6A6A"/><rect x="4" y="2" width="1" height="5" fill="#6A6A6A"/></svg><svg style="position:absolute;left:24px;top:480px" width="16" height="16" viewBox="0 0 16 16"><rect x="1.5" y="1.5" width="12" height="13" rx="1" fill="#fff" stroke="#7A96B0"/><rect x="2" y="2" width="11" height="3" fill="#78C058"/><rect x="6" y="9" width="3" height="2" fill="#78C058"/><path d="M2 5.5H13M2 8.5H13M2 11.5H13M5.5 2V14M9.5 2V14" stroke="#8AA0B0"/></svg><div style="position:absolute;left:46px;top:482px;white-space:pre;font-size:11px;line-height:14px;color:#000;">Регистры сведений</div><svg style="position:absolute;left:8px;top:503px" width="9" height="9" viewBox="0 0 9 9"><circle cx="4.5" cy="4.5" r="4.1" fill="#fff" stroke="#B4B4B4" stroke-width="0.9"/><rect x="2" y="4" width="5" height="1" fill="#6A6A6A"/><rect x="4" y="2" width="1" height="5" fill="#6A6A6A"/></svg><svg style="position:absolute;left:24px;top:499px" width="16" height="16" viewBox="0 0 16 16"><rect x="1.5" y="1.5" width="12" height="13" rx="1" fill="url(#gpage)" stroke="#7A96B0"/><ellipse cx="7.5" cy="10" rx="4" ry="1.8" fill="#F0C030" stroke="#C09010" stroke-width="0.7"/><ellipse cx="7.5" cy="7.5" rx="4" ry="1.8" fill="#F8D850" stroke="#C09010" stroke-width="0.7"/><ellipse cx="7.5" cy="5" rx="4" ry="1.8" fill="#F8E070" stroke="#C09010" stroke-width="0.7"/></svg><div style="position:absolute;left:46px;top:501px;white-space:pre;font-size:11px;line-height:14px;color:#000;">Регистры накопления</div><svg style="position:absolute;left:8px;top:522px" width="9" height="9" viewBox="0 0 9 9"><circle cx="4.5" cy="4.5" r="4.1" fill="#fff" stroke="#B4B4B4" stroke-width="0.9"/><rect x="2" y="4" width="5" height="1" fill="#6A6A6A"/><rect x="4" y="2" width="1" height="5" fill="#6A6A6A"/></svg><svg style="position:absolute;left:24px;top:518px" width="16" height="16" viewBox="0 0 16 16"><rect x="1.5" y="1.5" width="12" height="13" rx="1" fill="url(#gpage)" stroke="#7A96B0"/><path d="M3 4.5H9M6 4.5V12" stroke="#3A80C0" stroke-width="1.8"/><path d="M8 7.5H12M10 7.5V13" stroke="#3A80C0" stroke-width="1.8"/></svg><div style="position:absolute;left:46px;top:520px;white-space:pre;font-size:11px;line-height:14px;color:#000;">Регистры бухгалтерии</div><svg style="position:absolute;left:24px;top:537px" width="16" height="16" viewBox="0 0 16 16"><rect x="1.5" y="1.5" width="12" height="13" rx="1" fill="url(#gpage)" stroke="#7A96B0"/><path d="M2.5 8L7.5 5.5L12.5 8L7.5 10.5Z" fill="#40A040"/></svg><div style="position:absolute;left:46px;top:539px;white-space:pre;font-size:11px;line-height:14px;color:#000;">Регистры расчета</div><svg style="position:absolute;left:24px;top:556px" width="16" height="16" viewBox="0 0 16 16"><rect x="5" y="0.5" width="6" height="4" fill="#6AA0D8" stroke="#3A6AA8" stroke-width="0.6"/><path d="M8 4.5V7" stroke="#3A5A8A"/><rect x="4" y="6" width="8" height="4" fill="#F0C8A0"/><path d="M0 11H7L3.5 15Z" fill="#3A6AA8"/><path d="M11.5 8L15.5 12L11.5 16L7.5 12Z" fill="#E04030"/></svg><div style="position:absolute;left:46px;top:558px;white-space:pre;font-size:11px;line-height:14px;color:#000;">Бизнес-процессы</div><svg style="position:absolute;left:24px;top:575px" width="16" height="16" viewBox="0 0 16 16"><path d="M1.5 1.5H10.5L13.5 4.5V14.5H1.5Z" fill="url(#gpage)" stroke="#7A96B0"/><path d="M3 4.5H4M3 6.5H4M3 8.5H4M3 10.5H4M3 12.5H4" stroke="#3A78C8"/><path d="M5 4.5H9M5 6.5H9M5 8.5H9M5 10.5H9M5 12.5H9" stroke="#A0A8B0"/><path d="M10 6.5H12M10 8.5H12M10 10.5H12M10 12.5H12" stroke="#E04040"/></svg><div style="position:absolute;left:46px;top:577px;white-space:pre;font-size:11px;line-height:14px;color:#000;">Задачи</div><div style="position:absolute;left:0;top:0;width:1280px;height:746px;overflow:hidden"><div style="position:absolute;left:254px;top:94px;width:1026px;height:653px;background:#D8D2BC;"></div><div style="position:absolute;left:254px;top:94px;width:1024px;height:1px;background:#6A6A6A;"></div><div style="position:absolute;left:254px;top:95px;width:1024px;height:1px;background:#3C3C3C;"></div><div style="position:absolute;left:254px;top:94px;width:1px;height:653px;background:#6A6A6A;"></div><div style="position:absolute;left:255px;top:95px;width:1px;height:652px;background:#3C3C3C;"></div><div style="position:absolute;left:1278px;top:94px;width:1px;height:653px;background:#D0CCC0;"></div><div style="position:absolute;left:1279px;top:94px;width:1px;height:653px;background:#FFFFFF;"></div><div style="position:absolute;left:256px;top:96px;width:492px;height:450px;background:#B4B4B4;border-top:1px solid #fff;border-left:1px solid #fff;border-right:1px solid #606060;border-bottom:1px solid #505050;"></div><svg style="position:absolute;left:261px;top:100px" width="16" height="16" viewBox="0 0 16 16"><rect x="1.5" y="1.5" width="12" height="13" fill="#F6FAFE" stroke="#6A8AAA"/><path d="M7 4.5H11M7 6.5H11" stroke="#A0B4C8"/><path d="M4 9.5H11M4 11.5H11M4 13.5H11" stroke="#8AAAC8"/></svg><div style="position:absolute;left:282px;top:102px;white-space:pre;font-weight:bold;font-size:12px;line-height:14px;color:#6A6A6A;">Документ ПродажаТоваров</div><svg style="position:absolute;left:688px;top:103px" width="60" height="14" viewBox="0 0 60 14"><rect x="2" y="9" width="8" height="2" fill="#6A6A6A"/><rect x="20.5" y="0.5" width="11" height="11" fill="none" stroke="#6A6A6A"/><rect x="20" y="0" width="12" height="2" fill="#6A6A6A"/><path d="M43 1.5L51 9.5M51 1.5L43 9.5" stroke="#6A6A6A" stroke-width="2"/></svg><div style="position:absolute;left:259px;top:118px;width:488px;height:425px;background:#FCFAEC;border-top:1px solid #606060;border-left:1px solid #606060;border-bottom:1px solid #606060;"></div><div style="position:absolute;left:266px;top:125px;width:20px;height:23px;background:#EDE7D0;border:1px solid #D0C8AC;border-radius:7px 0 0 7px;"></div><div style="position:absolute;left:266px;top:147px;width:20px;height:23px;background:#EDE7D0;border:1px solid #D0C8AC;border-radius:7px 0 0 7px;"></div><div style="position:absolute;left:266px;top:169px;width:20px;height:23px;background:#EDE7D0;border:1px solid #D0C8AC;border-radius:7px 0 0 7px;"></div><div style="position:absolute;left:266px;top:191px;width:20px;height:23px;background:#EDE7D0;border:1px solid #D0C8AC;border-radius:7px 0 0 7px;"></div><div style="position:absolute;left:266px;top:213px;width:20px;height:23px;background:#EDE7D0;border:1px solid #D0C8AC;border-radius:7px 0 0 7px;"></div><div style="position:absolute;left:266px;top:235px;width:20px;height:23px;background:#EDE7D0;border:1px solid #D0C8AC;border-radius:7px 0 0 7px;"></div><div style="position:absolute;left:266px;top:257px;width:20px;height:23px;background:#EDE7D0;border:1px solid #D0C8AC;border-radius:7px 0 0 7px;"></div><div style="position:absolute;left:266px;top:279px;width:20px;height:23px;background:#EDE7D0;border:1px solid #D0C8AC;border-radius:7px 0 0 7px;"></div><div style="position:absolute;left:266px;top:301px;width:20px;height:23px;background:#EDE7D0;border:1px solid #D0C8AC;border-radius:7px 0 0 7px;"></div><div style="position:absolute;left:266px;top:323px;width:20px;height:23px;background:#EDE7D0;border:1px solid #D0C8AC;border-radius:7px 0 0 7px;"></div><div style="position:absolute;left:266px;top:345px;width:20px;height:23px;background:#EDE7D0;border:1px solid #D0C8AC;border-radius:7px 0 0 7px;"></div><div style="position:absolute;left:266px;top:367px;width:20px;height:23px;background:#EDE7D0;border:1px solid #D0C8AC;border-radius:7px 0 0 7px;"></div><div style="position:absolute;left:266px;top:389px;width:20px;height:23px;background:#EDE7D0;border:1px solid #D0C8AC;border-radius:7px 0 0 7px;"></div><div style="position:absolute;left:266px;top:411px;width:20px;height:23px;background:#EDE7D0;border:1px solid #D0C8AC;border-radius:7px 0 0 7px;"></div><div style="position:absolute;left:266px;top:433px;width:20px;height:23px;background:#FFFDF4;border:1px solid #CCC4A8;border-radius:7px 0 0 7px;box-shadow:inset 1px 0 0 #F8D8A0;"></div><div style="position:absolute;left:276px;top:116px;width:907px;height:640px;background:#CCCCCC;border-top:1px solid #fff;border-left:1px solid #fff;border-right:1px solid #8C8C8C;"></div><svg style="position:absolute;left:282px;top:120px" width="16" height="16" viewBox="0 0 16 16"><path d="M2.5 1.5H10.5L13.5 4.5V15.5H2.5Z" fill="#F6FAFE" stroke="#6A8AAA"/><path d="M10.5 1.5V4.5H13.5" fill="#D8E6F2" stroke="#6A8AAA"/><path d="M5 4.5H9M5 6.5H9" stroke="#A0B4C8"/><path d="M4.5 9.5H11.5M4.5 11.5H11.5M4.5 13.5H11.5" stroke="#8AAAC8"/></svg><div style="position:absolute;left:302px;top:122px;white-space:pre;font-weight:bold;font-size:12px;line-height:14px;color:#1E1E1E;">Документ ПродажаТоваров: Модуль объекта</div><svg style="position:absolute;left:1123px;top:122px" width="54" height="14" viewBox="0 0 54 14"><rect x="2" y="9" width="8" height="2" fill="#1E1E1E"/><rect x="20.5" y="1.5" width="10" height="10" fill="none" stroke="#1E1E1E"/><rect x="20" y="1" width="11" height="2" fill="#1E1E1E"/><path d="M42.5 2.5L50.5 10.5M50.5 2.5L42.5 10.5" stroke="#1E1E1E" stroke-width="2"/></svg><div style="position:absolute;left:279px;top:138px;width:901px;height:620px;background:#fff;border-top:1px solid #6C6C6C;border-left:1px solid #6C6C6C;"></div><div style="position:absolute;left:280px;top:139px;width:16px;height:620px;background-color:#F3F1E6;background-image:linear-gradient(45deg,#E4E0CC 25%,transparent 25%,transparent 75%,#E4E0CC 75%),linear-gradient(45deg,#E4E0CC 25%,transparent 25%,transparent 75%,#E4E0CC 75%);background-size:2px 2px;background-position:0 0,1px 1px;"></div><div style="position:absolute;left:304px;top:139px;width:1px;height:620px;background:#606060;"></div><div style="position:absolute;left:1163px;top:139px;width:17px;height:607px;background:#F8F7F2;border-left:1px solid #BDB79E;"></div><div style="position:absolute;left:1179px;top:139px;width:1px;height:607px;background:#6E6E6E;"></div><div style="position:absolute;left:1180px;top:139px;width:2px;height:607px;background:#D4D4D4;"></div><div style="position:absolute;left:1164px;top:139px;width:15px;height:21px;background:linear-gradient(to right,#FDFCF4,#EEE8CC);border-bottom:1px solid #C8C0A0;"></div><svg style="position:absolute;left:1167px;top:145px" width="9" height="8" viewBox="0 0 9 8"><path d="M4.5 0.5L8.5 7.5H0.5Z" fill="#909090"/></svg><div style="position:absolute;left:1164px;top:433px;width:15px;height:286px;background:linear-gradient(to right,#FAF8EC,#F2ECD0 40%,#E8E0BC);border-top:1px solid #BDB79E;border-bottom:1px solid #BDB79E;"></div><svg style="position:absolute;left:1169px;top:573px" width="5" height="5" viewBox="0 0 5 5"><circle cx="2.5" cy="2.5" r="2" fill="#D0C8B0"/></svg><pre style="position:absolute;left:347px;top:141px;margin:0;font-family:'Liberation Mono', monospace;font-size:13.333px;line-height:16px;color:#000;">    |СГРУППИРОВАТЬ ПО
    |   ПродажаТоваровСписокТоваров.Номенклатура
    |
    |ИНДЕКСИРОВАТЬ ПО
    |   Номенклатура
    |;
    |
    |////////////////////////////////////////////////////////////////////////////////
    |ВЫБРАТЬ
    |   Док.Номенклатура,
    |   Док.Количество,
    |   ЕстьNULL(УправленческийОстатки.КоличествоОстаток,0) как КоличествоОстаток,
    |   ЕстьNULL(УправленческийОстатки.СуммаОстаток,0) как СуммаОстаток
    |ИЗ
    |   Док КАК Док
    |       ВНУТРЕННЕЕ СОЕДИНЕНИЕ РегистрБухгалтерии.Управленческий.Остатки(
    |               &amp;МоментВремени,
    |               Счет = &amp;Счет,
    |               &amp;МассивСубконто,
    |               Субконто1 В
    |                       (ВЫБРАТЬ
    |                           Док.Номенклатура
    |                       ИЗ
    |                           Док КАК Док)
    |                   И Субконто2 = &amp;Склады) КАК УправленческийОстатки
    |       ПО Док.Номенклатура = УправленческийОстатки.Субконто1&quot;<span style="color:#FF0000">;</span>

<span style="color:#0000FF">МассивСубконто</span><span style="color:#FF0000">=</span> <span style="color:#FF0000">новый</span> <span style="color:#0000FF">Массив</span><span style="color:#FF0000">(</span>2<span style="color:#FF0000">)</span><span style="color:#FF0000">;</span>
<span style="color:#0000FF">МассивСубконто</span><span style="color:#FF0000">[</span>0<span style="color:#FF0000">]</span><span style="color:#FF0000">=</span><span style="color:#0000FF">ПланыВидовХарактеристик</span><span style="color:#FF0000">.</span><span style="color:#0000FF">ВидыСубконто</span><span style="color:#FF0000">.</span><span style="color:#0000FF">Номенклатуры</span><span style="color:#FF0000">;</span>
<span style="color:#0000FF">МассивСубконто</span><span style="color:#FF0000">[</span>1<span style="color:#FF0000">]</span><span style="color:#FF0000">=</span><span style="color:#0000FF">ПланыВидовХарактеристик</span><span style="color:#FF0000">.</span><span style="color:#0000FF">ВидыСубконто</span><span style="color:#FF0000">.</span><span style="color:#0000FF">Склады</span><span style="color:#FF0000">;</span>

<span style="color:#0000FF">Запрос</span><span style="color:#FF0000">.</span><span style="color:#0000FF">УстановитьПараметр</span><span style="color:#FF0000">(</span>&quot;МассивСубконто&quot;<span style="color:#FF0000">,</span> <span style="color:#0000FF">МассивСубконто</span><span style="color:#FF0000">)</span><span style="color:#FF0000">;</span>
<span style="color:#0000FF">Запрос</span><span style="color:#FF0000">.</span><span style="color:#0000FF">УстановитьПараметр</span><span style="color:#FF0000">(</span>&quot;МоментВремени&quot;<span style="color:#FF0000">,</span> <span style="color:#0000FF">МоментВремени</span><span style="color:#FF0000">(</span><span style="color:#FF0000">)</span><span style="color:#FF0000">)</span><span style="color:#FF0000">;</span>
<span style="color:#0000FF">Запрос</span><span style="color:#FF0000">.</span><span style="color:#0000FF">УстановитьПараметр</span><span style="color:#FF0000">(</span>&quot;Склады&quot;<span style="color:#FF0000">,</span> <span style="color:#0000FF">Склад</span><span style="color:#FF0000">)</span><span style="color:#FF0000">;</span>
<span style="color:#0000FF">Запрос</span><span style="color:#FF0000">.</span><span style="color:#0000FF">УстановитьПараметр</span><span style="color:#FF0000">(</span>&quot;Ссылка&quot;<span style="color:#FF0000">,</span> <span style="color:#0000FF">Ссылка</span><span style="color:#FF0000">)</span><span style="color:#FF0000">;</span>
<span style="color:#0000FF">Запрос</span><span style="color:#FF0000">.</span><span style="color:#0000FF">УстановитьПараметр</span><span style="color:#FF0000">(</span>&quot;Счет&quot;<span style="color:#FF0000">,</span> <span style="color:#0000FF">ПланыСчетов</span><span style="color:#FF0000">.</span><span style="color:#0000FF">Управленческий</span><span style="color:#FF0000">.</span><span style="color:#0000FF">Товары</span><span style="color:#FF0000">)</span><span style="color:#FF0000">;</span>

<span style="color:#0000FF">Результат</span> <span style="color:#FF0000">=</span> <span style="color:#0000FF">Запрос</span><span style="color:#FF0000">.</span><span style="color:#0000FF">Выполнить</span><span style="color:#FF0000">(</span><span style="color:#FF0000">)</span><span style="color:#FF0000">;</span></pre></div><div style="position:absolute;left:254px;top:746px;width:1026px;height:1px;background:#FFFFFF;"></div><div style="position:absolute;left:254px;top:746px;width:2px;height:1px;background:#404040;"></div><div style="position:absolute;left:0px;top:751px;width:1280px;height:18px;background:#B4B4B4;"></div><div style="position:absolute;left:5px;top:753px;white-space:pre;font-weight:bold;font-size:11.8px;line-height:14px;color:#646464;">Служебные сообщения</div><svg style="position:absolute;left:1250px;top:755px" width="6" height="9" viewBox="0 0 6 9"><path d="M1.5 1.5H4.5V6.5H1.5Z" fill="#C8C8C8" stroke="#fff"/><rect x="2.5" y="7" width="1" height="2" fill="#E0E0E0"/></svg><svg style="position:absolute;left:1265px;top:755px" width="11" height="11" viewBox="0 0 11 11"><path d="M1.5 1.5L9.5 9.5M9.5 1.5L1.5 9.5" stroke="#555" stroke-width="2.2"/></svg><div style="position:absolute;left:0px;top:769px;width:1280px;height:166px;background:#fff;"></div><div style="position:absolute;left:0px;top:769px;width:18px;height:166px;background-color:#F3F1E6;background-image:linear-gradient(45deg,#E4E0CC 25%,transparent 25%,transparent 75%,#E4E0CC 75%),linear-gradient(45deg,#E4E0CC 25%,transparent 25%,transparent 75%,#E4E0CC 75%);background-size:2px 2px;background-position:0 0,1px 1px;"></div><div style="position:absolute;left:0px;top:935px;width:1280px;height:16px;background:#F8F7F2;border-top:1px solid #C8C0A0;"></div><div style="position:absolute;left:0px;top:936px;width:20px;height:15px;background:linear-gradient(to bottom,#FDFCF4,#EEE8CC);border-right:1px solid #D0C8A8;"></div><svg style="position:absolute;left:6px;top:940px" width="7" height="8" viewBox="0 0 7 8"><path d="M6.5 0.5V7.5L0.5 4Z" fill="#C8C8C0"/></svg><div style="position:absolute;left:20px;top:936px;width:732px;height:15px;background:linear-gradient(to bottom,#FAF8EC,#F2ECD0 40%,#E8E0BC);border-right:1px solid #C8C0A0;"></div><svg style="position:absolute;left:384px;top:941px" width="5" height="5" viewBox="0 0 5 5"><circle cx="2.5" cy="2.5" r="2" fill="#D0C8B0"/></svg><div style="position:absolute;left:1259px;top:936px;width:21px;height:15px;background:linear-gradient(to bottom,#FDFCF4,#EEE8CC);border-left:1px solid #D0C8A8;"></div><svg style="position:absolute;left:1266px;top:940px" width="7" height="8" viewBox="0 0 7 8"><path d="M0.5 0.5V7.5L6.5 4Z" fill="#909090"/></svg><div style="position:absolute;left:1px;top:952px;width:172px;height:20px;background:#B4B4B4;border:1px solid #C8BE96;"></div><svg style="position:absolute;left:3px;top:954px" width="16" height="16" viewBox="0 0 16 16"><rect x="1.5" y="1.5" width="12" height="13" fill="#F6FAFE" stroke="#6A8AAA"/><path d="M7 4.5H11M7 6.5H11" stroke="#A0B4C8"/><path d="M4 9.5H11M4 11.5H11M4 13.5H11" stroke="#8AAAC8"/></svg><div style="position:absolute;left:21px;top:955px;white-space:pre;font-size:11px;line-height:14px;color:#1E1E1E;">Документ ПродажаТоваров</div><div style="position:absolute;left:174px;top:952px;width:172px;height:20px;background:#B4CCE6;border:1px solid #C8BE96;"></div><svg style="position:absolute;left:177px;top:954px" width="16" height="16" viewBox="0 0 16 16"><path d="M2.5 1.5H10.5L13.5 4.5V15.5H2.5Z" fill="#F6FAFE" stroke="#6A8AAA"/><path d="M10.5 1.5V4.5H13.5" fill="#D8E6F2" stroke="#6A8AAA"/><path d="M5 4.5H9M5 6.5H9" stroke="#A0B4C8"/><path d="M4.5 9.5H11.5M4.5 11.5H11.5M4.5 13.5H11.5" stroke="#8AAAC8"/></svg><div style="position:absolute;left:194px;top:955px;white-space:pre;font-size:11px;line-height:14px;color:#1E1E1E;">Документ...: Модуль объекта</div><div style="position:absolute;left:1px;top:974px;width:982px;height:19px;border:1px solid #DCD8C0;"></div><div style="position:absolute;left:988px;top:974px;width:29px;height:19px;border:1px solid #DCD8C0;"></div><div style="position:absolute;left:1022px;top:974px;width:33px;height:19px;border:1px solid #DCD8C0;"></div><div style="position:absolute;left:1060px;top:974px;width:31px;height:19px;border:1px solid #DCD8C0;"></div><div style="position:absolute;left:1096px;top:974px;width:24px;height:19px;border:1px solid #DCD8C0;"></div><div style="position:absolute;left:1125px;top:974px;width:155px;height:19px;border:1px solid #DCD8C0;"></div><div style="position:absolute;left:5px;top:977px;white-space:pre;font-size:11px;line-height:14px;color:#2E2610;">Для получения подсказки нажмите F1</div><div style="position:absolute;left:991px;top:977px;white-space:pre;font-size:11px;line-height:14px;color:#9A8A50;">CAP</div><div style="position:absolute;left:1025px;top:977px;white-space:pre;font-size:11px;line-height:14px;color:#2E2610;">NUM</div><div style="position:absolute;left:1063px;top:977px;white-space:pre;font-size:11px;line-height:14px;color:#9A8A50;">OVR</div><div style="position:absolute;left:1099px;top:977px;white-space:pre;font-size:11px;line-height:14px;color:#2E2610;">ru</div><svg style="position:absolute;left:1111px;top:982px" width="5" height="3" viewBox="0 0 5 3"><path d="M0 0H5L2.5 3Z" fill="#2E2610"/></svg><div style="position:absolute;left:1128px;top:977px;white-space:pre;font-size:11px;line-height:14px;color:#2E2610;">Стр: 73</div><div style="position:absolute;left:1205px;top:977px;white-space:pre;font-size:11px;line-height:14px;color:#2E2610;">Кол: 7</div><div style="position:absolute;left:0px;top:994px;width:1280px;height:4px;background:#D4D0C8;"></div><div style="position:absolute;left:0px;top:994px;width:1280px;height:1px;background:#D8D4C8;"></div><div style="position:absolute;left:0px;top:995px;width:1280px;height:1px;background:#FFFFFF;"></div></body></html>
